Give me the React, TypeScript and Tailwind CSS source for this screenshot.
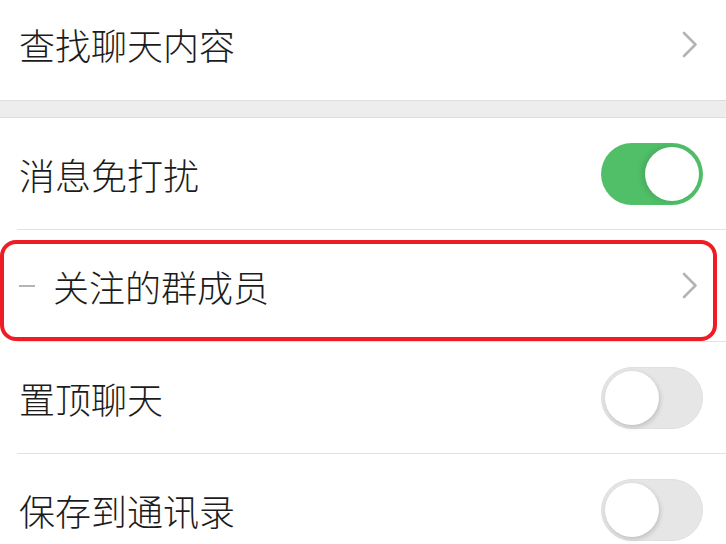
import React from "react";

const font = { fontFamily: '"Noto Sans CJK SC", "Noto Sans", sans-serif' };

function Chevron() {
  return (
    <svg width="16" height="27" viewBox="0 0 16 27" className="shrink-0">
      <path d="M2 2 L13.5 13.5 L2 25" fill="none" stroke="#b4b4b4" strokeWidth="2.6" strokeLinecap="round" strokeLinejoin="round" />
    </svg>
  );
}

function Toggle({ on }: { on: boolean }) {
  if (on) {
    return (
      <div className="w-[102px] h-[62px] rounded-full bg-[#50bf68] flex items-center justify-end pr-[4px] shrink-0">
        <div className="w-[54px] h-[54px] rounded-full bg-white shadow-[-3px_0_6px_rgba(0,0,0,0.12)]" />
      </div>
    );
  }
  return (
    <div className="w-[102px] h-[62px] rounded-full bg-[#e6e6e6] border border-[#e0e0e0] flex items-center pl-[3px] shrink-0">
      <div className="w-[54px] h-[54px] rounded-full bg-white shadow-[1px_2px_5px_rgba(0,0,0,0.18)]" />
    </div>
  );
}

function Divider() {
  return <div className="h-px bg-[#e2e2e2] ml-[17px]" />;
}

export default function App() {
  return (
    <div className="w-[726px] h-[544px] overflow-hidden bg-white text-[#1c1c1c] font-light" style={font}>
      <div className="mt-[-12px]">
        <div className="h-[112px] flex items-center justify-between pl-[19px] pr-[28px]">
          <span className="text-[36px] leading-none">查找聊天内容</span>
          <Chevron />
        </div>
        <div className="h-[18px] bg-[#ededed] border-y border-[#dddddd]" />
        <div className="h-[111px] flex items-center justify-between pl-[19px] pr-[23px]">
          <span className="text-[36px] leading-none">消息免打扰</span>
          <Toggle on />
        </div>
        <Divider />
        <div className="relative h-[111px] flex items-center justify-between pl-[19px] pr-[28px]">
          <div className="flex items-center">
            <div className="w-[16px] h-[2px] bg-[#b4b4b4] mr-[18px]" />
            <span className="text-[36px] leading-none">关注的群成员</span>
          </div>
          <Chevron />
          <div className="absolute left-0 top-[10px] w-[717px] h-[101px] border-[4px] border-[#ee1c25] rounded-[16px] pointer-events-none" />
        </div>
        <Divider />
        <div className="h-[111px] flex items-center justify-between pl-[19px] pr-[23px]">
          <span className="text-[36px] leading-none">置顶聊天</span>
          <Toggle on={false} />
        </div>
        <Divider />
        <div className="h-[111px] flex items-center justify-between pl-[19px] pr-[23px]">
          <span className="text-[36px] leading-none">保存到通讯录</span>
          <Toggle on={false} />
        </div>
      </div>
    </div>
  );
}
